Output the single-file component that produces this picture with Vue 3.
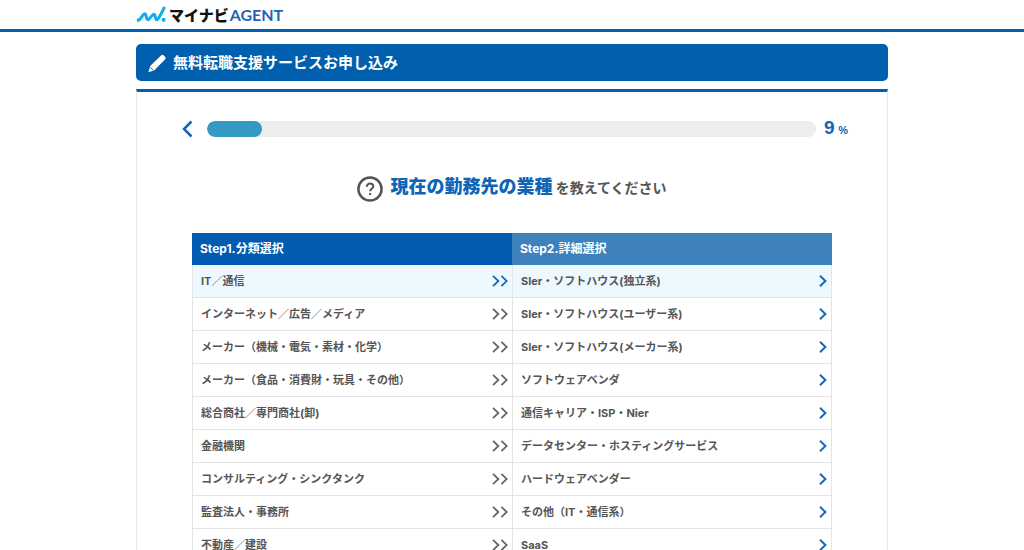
<script setup>
import { ref } from 'vue'

const progress = 9
const selected = ref(0)
const categories = [
  'IT／通信',
  'インターネット／広告／メディア',
  'メーカー（機械・電気・素材・化学）',
  'メーカー（食品・消費財・玩具・その他）',
  '総合商社／専門商社(卸)',
  '金融機関',
  'コンサルティング・シンクタンク',
  '監査法人・事務所',
  '不動産／建設'
]
const details = [
  'SIer・ソフトハウス(独立系)',
  'SIer・ソフトハウス(ユーザー系)',
  'SIer・ソフトハウス(メーカー系)',
  'ソフトウェアベンダ',
  '通信キャリア・ISP・Nier',
  'データセンター・ホスティングサービス',
  'ハードウェアベンダー',
  'その他（IT・通信系）',
  'SaaS'
]
</script>

<template>
  <div class="page" lang="ja">
    <header class="site-header">
      <a class="brand wrap" href="#" aria-label="マイナビAGENT">
        <svg class="mark" viewBox="0 0 30 18" width="30" height="18" aria-hidden="true">
          <path d="M1 14.8 Q4 14 6 10.5T9.5 8.2L11 13Q12 14.6 13.5 12.6L16.2 9.4Q18.2 7.2 18.9 9.4L19.9 13Q20.7 14.6 22.2 12.6Q25 8.5 28.6 .8" />
          <circle cx="27.6" cy="13.8" r="2" />
        </svg>
        <span class="brand-ja">マイナビ</span>
        <span class="brand-en">AGENT</span>
      </a>
    </header>

    <main class="wrap">
      <h1 class="title">
        <svg viewBox="0 0 20 20" width="20" height="20" aria-hidden="true">
          <path fill="#fff" d="M14 2.4Q15.4 1.2 16.8 2.5L18.1 3.8Q19.3 5.2 18 6.5L7.4 17.2 1.4 19.2 3.2 13.1Z" />
          <path fill="none" stroke="#0060ae" d="M3.3 14.4 6.1 17.2" />
        </svg>
        無料転職支援サービスお申し込み
      </h1>

      <section class="panel">
        <div class="progress">
          <button class="back" type="button" aria-label="戻る">
            <svg viewBox="0 0 11 18" width="11" height="18"><path d="M9.5 1.5 2 9 9.5 16.5" /></svg>
          </button>
          <div class="track" role="progressbar" :aria-valuenow="progress" aria-valuemin="0" aria-valuemax="100" aria-label="進捗">
            <div class="fill" :style="{ width: progress + '%' }"></div>
          </div>
          <p class="percent"><b>{{ progress }}</b><small>%</small></p>
        </div>

        <h2 class="question">
          <svg viewBox="0 0 26 26" width="26" height="26" aria-hidden="true">
            <circle cx="13" cy="13" r="11.6" />
            <path d="M9.8 10.7C9.8 8.7 11.2 7.6 13 7.6S16.3 8.8 16.3 10.4C16.3 12.6 13.1 12.7 13.1 15.2M13.1 16.9V19" />
          </svg>
          <span class="question-text"><strong>現在の勤務先の業種</strong> を教えてください</span>
        </h2>

        <div class="steps">
          <section class="step first">
            <h3>Step1.分類選択</h3>
            <ul>
              <li v-for="(item, i) in categories" :key="item">
                <button type="button" :class="{ active: selected === i }" :aria-pressed="selected === i" @click="selected = i">
                  <span>{{ item }}</span>
                  <svg viewBox="0 0 16 12" width="16" height="12" aria-hidden="true"><path d="M1 .8 6.4 6 1 11.2M9.4.8 14.8 6 9.4 11.2" /></svg>
                </button>
              </li>
            </ul>
          </section>
          <section class="step second">
            <h3>Step2.詳細選択</h3>
            <ul>
              <li v-for="(item, i) in details" :key="item">
                <button type="button" :class="{ active: i === 0 }">
                  <span>{{ item }}</span>
                  <svg viewBox="0 0 8 12" width="8" height="12" aria-hidden="true"><path d="M1 .8 6.4 6 1 11.2" /></svg>
                </button>
              </li>
            </ul>
          </section>
        </div>
      </section>
    </main>
  </div>
</template>

<style>
body { background: #fff; }
</style>

<style scoped>
* { box-sizing: border-box; margin: 0; padding: 0; }
.page {
  height: 100vh;
  overflow-y: auto;
  scrollbar-width: none;
  color: #555;
  font-family: Inter, "Noto Sans CJK JP", sans-serif;
  font-size: 11px;
  font-weight: 700;
}
svg { display: block; flex: none; }
button { border: 0; background: none; color: inherit; font: inherit; cursor: pointer; }
ul { list-style: none; }
.wrap { width: 100%; max-width: 752px; margin: 0 auto; }
.site-header { border-bottom: 3px solid #0062b2; }
.brand { display: flex; align-items: center; height: 29px; text-decoration: none; line-height: 20px; }
.mark { fill: none; stroke: #11aeea; stroke-width: 3; stroke-linejoin: round; }
.mark circle { fill: #11aeea; stroke: none; }
.brand-ja { margin-left: 3px; color: #111; font-family: "Noto Sans CJK JP", sans-serif; font-size: 15px; font-weight: 900; }
.brand-en { margin-left: 1px; color: #2464b4; font-family: Lato, sans-serif; font-size: 16px; }
.title {
  display: flex;
  align-items: center;
  gap: 6px;
  height: 37px;
  margin-top: 12px;
  padding-left: 11px;
  border-radius: 5px;
  background: #0060ae;
  color: #fff;
  font-size: 15px;
  line-height: 24px;
}
.panel {
  margin-top: 8px;
  padding: 28px 55px 40px;
  border: 1px solid #e8e8e8;
  border-top: 3px solid #0062b2;
}
.progress { display: flex; align-items: center; height: 18px; margin: 0 16px 0 -10px; }
.back { margin-right: 14px; }
.back path { fill: none; stroke: #1464b8; stroke-width: 2.5; }
.track { flex: 1; height: 16px; border-radius: 8px; background: #ededed; overflow: hidden; }
.fill { height: 100%; border-radius: 8px; background: #3499c3; }
.percent { display: flex; align-items: baseline; justify-content: space-between; width: 24px; margin: 0 -32px 0 8px; color: #1464b8; font-family: "Liberation Sans", Arial, sans-serif; line-height: 22px; }
.percent b { font-size: 19px; }
.percent small { font-size: 11px; }
.question { display: flex; align-items: center; justify-content: center; gap: 7px; margin: 37px 0 31px; font-size: 14px; line-height: 24px; }
.question-text { padding-bottom: 2px; }
.question svg { fill: none; stroke: #555; stroke-width: 2.5; }
.question path { stroke-width: 2; }
.question strong { color: #0e65b7; font-size: 18px; }
.steps { display: grid; grid-template-columns: 1fr 1fr; }
.step h3 { height: 32px; padding-left: 8px; background: #005bb1; color: #fff; font-size: 12px; line-height: 32px; }
.second h3 { background: #3d82bb; }
.step button {
  display: flex;
  align-items: center;
  justify-content: space-between;
  width: 100%;
  height: 33px;
  padding: 0 4px 0 8px;
  border: 1px solid #e4e4e4;
  border-width: 0 0 1px 1px;
  text-align: left;
  line-height: 20px;
}
.second button { border-right-width: 1px; }
.step .active { background: #edf8ff; }
.step path { fill: none; stroke: #666; stroke-width: 1.8; }
.first .active path, .second path { stroke: #1868ba; }
.second path { stroke-width: 2; }
</style>
